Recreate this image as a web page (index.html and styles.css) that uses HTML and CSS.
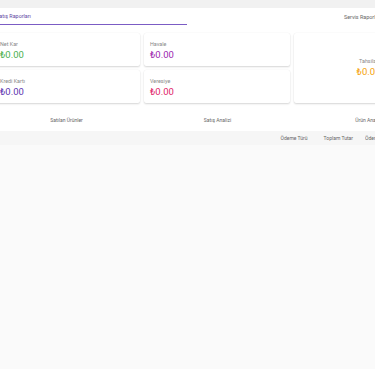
FILE: index.html
```html
<!DOCTYPE html>
<html lang="tr">
<head>
<meta charset="utf-8">
<link rel="stylesheet" href="styles.css">
</head>
<body>
<div class="topbar"></div>
<div class="page">
  <div class="tabs">
    <div class="tab tab-active">Satış Raporları</div>
    <div class="tab tab-second">Servis Raporları</div>
  </div>
  <div class="cards">
    <div class="card"><div class="label">Net Kar</div><div class="amount green">₺0.00</div></div>
    <div class="card"><div class="label">Havale</div><div class="amount purple">₺0.00</div></div>
    <div class="card card-tall"><div class="label">Tahsilat</div><div class="amount orange">₺0.00</div></div>
    <div class="card"><div class="label">Kredi Kartı</div><div class="amount indigo">₺0.00</div></div>
    <div class="card"><div class="label">Veresiye</div><div class="amount pink">₺0.00</div></div>
  </div>
  <div class="subtabs">
    <div class="subtab">Satılan Ürünler</div>
    <div class="subtab">Satış Analizi</div>
    <div class="subtab">Ürün Analizi</div>
  </div>
  <div class="table">
    <div class="thead">
      <div class="th">Ödeme Türü</div>
      <div class="th">Toplam Tutar</div>
      <div class="th">Ödeme</div>
    </div>
    <div class="tbody"></div>
  </div>
</div>
</body>
</html>
```
FILE: styles.css
```css
html, body {
  margin: 0;
  padding: 0;
  background: #ffffff;
  overflow: hidden;
  width: 375px;
  height: 375px;
  font-family: Roboto, "Noto Sans", "Liberation Sans", sans-serif;
}
.topbar {
  height: 8px;
  background: #f1f1f1;
}
.page {
  margin-left: -6px;
  width: 460px;
}
.tabs {
  display: flex;
  height: 17px;
  align-items: stretch;
}
.tab {
  font-size: 5.4px;
  color: #666;
  display: flex;
  align-items: center;
  box-sizing: border-box;
}
.tab-active {
  width: 193px;
  padding-left: 2px;
  color: #5f47a3;
  border-bottom: 1px solid #7b5cc4;
}
.tab-second {
  padding-left: 157px;
}
.cards {
  margin-top: 8px;
  display: grid;
  grid-template-columns: 146px 146px 146px;
  grid-template-rows: 33px 33px;
  gap: 4px;
}
.card {
  background: #fff;
  border-radius: 2px;
  box-shadow: 0 1px 2px rgba(0,0,0,0.16), 0 0 1px rgba(0,0,0,0.08);
  padding: 8px 6px 0;
  box-sizing: border-box;
}
.card-tall {
  grid-row: 1 / span 2;
  grid-column: 3;
  display: flex;
  flex-direction: column;
  align-items: center;
  justify-content: center;
  padding: 0 0 0 3px;
}
.label {
  font-size: 5.4px;
  color: #888;
  line-height: 6px;
}
.amount {
  font-size: 9.5px;
  line-height: 12px;
  margin-top: 2px;
}
.green { color: #4caf50; }
.purple { color: #9c27b0; }
.indigo { color: #5e35b1; }
.pink { color: #e0246a; }
.orange { color: #f5a20a; }
.subtabs {
  display: flex;
  margin-top: 10px;
  margin-left: -3px;
  height: 14px;
}
.subtab {
  width: 151px;
  flex: none;
  font-size: 5px;
  color: #666;
  display: flex;
  align-items: center;
  justify-content: center;
}
.table {
  margin-top: 4px;
  width: 381px;
}
.thead {
  height: 14px;
  background: #f6f6f6;
  display: flex;
  align-items: center;
  justify-content: flex-end;
  font-size: 5px;
  color: #666;
}
.th { flex: none; }
.th:nth-child(1) { margin-right: 16px; }
.th:nth-child(2) { margin-right: 12px; }
.th:nth-child(3) { width: 10px; overflow: hidden; white-space: nowrap; }
.tbody {
  height: 224px;
  background: #fafafa;
}
```
